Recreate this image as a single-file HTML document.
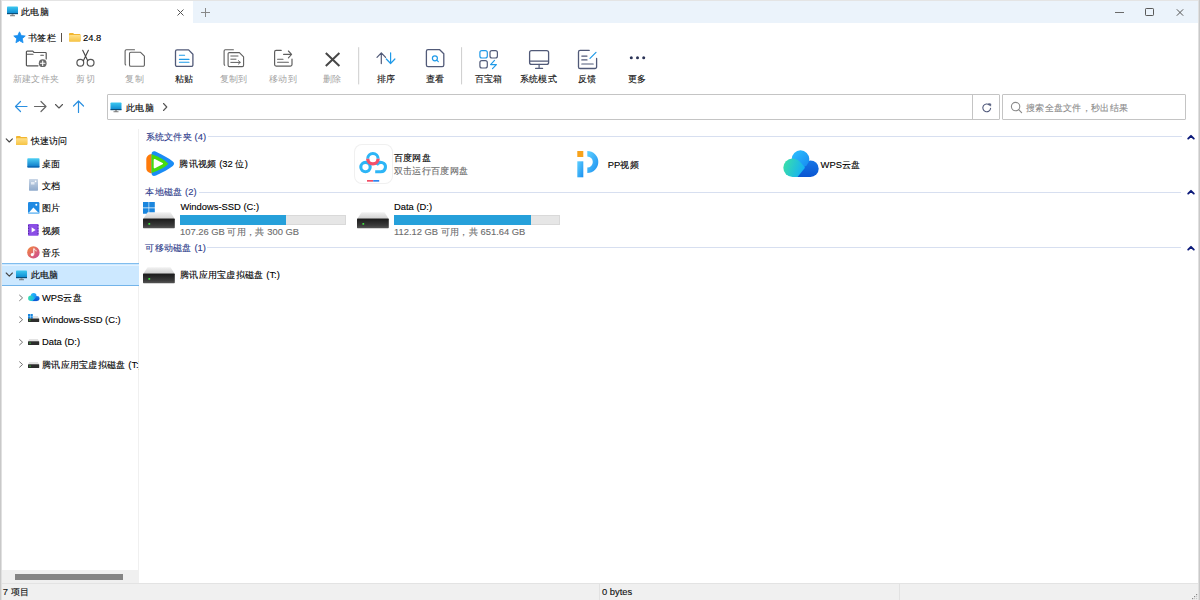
<!DOCTYPE html>
<html><head><meta charset="utf-8">
<style>
*{margin:0;padding:0;box-sizing:border-box}
html,body{width:1200px;height:600px;overflow:hidden;background:#fff}
body{position:relative;font-family:"Liberation Sans",sans-serif;font-size:9.4px;color:#000}
.a{position:absolute}
.t{position:absolute;white-space:nowrap;line-height:12px;-webkit-text-stroke-width:0.12px}
svg{position:absolute;overflow:visible}
.c{letter-spacing:0.3px}
</style></head><body>
<!-- window frame -->
<div class="a" style="left:0;top:0;width:1200px;height:1px;background:#e4e4e4"></div>
<div class="a" style="left:0;top:0;width:1px;height:600px;background:#c9c9c9"></div><div class="a" style="left:1px;top:0;width:1px;height:600px;background:#e0e0e0"></div>
<div class="a" style="left:1199px;top:0;width:1px;height:600px;background:#c9c9c9"></div><div class="a" style="left:1198px;top:0;width:1px;height:600px;background:#e0e0e0"></div>
<!-- title bar -->
<div class="a" style="left:2px;top:1px;width:1196px;height:22px;background:#ebf3fb"></div>
<div class="a" style="left:2px;top:1px;width:191px;height:22px;background:#fff"></div>


<!-- tab -->
<svg style="left:7px;top:6px" width="12" height="11" viewBox="0 0 12 11">
<defs><linearGradient id="scr" x1="0" y1="0" x2="0" y2="1"><stop offset="0" stop-color="#3cc8f0"/><stop offset="1" stop-color="#0b86cf"/></linearGradient></defs>
<rect x="0" y="0.5" width="11" height="7.5" rx="0.8" fill="url(#scr)"/>
<rect x="0" y="7" width="11" height="1.2" fill="#0a4f7a"/>
<rect x="4.5" y="8.2" width="2" height="1.3" fill="#8a8a8a"/>
<rect x="3" y="9.3" width="5" height="0.9" fill="#6a6a6a"/>
</svg>
<div class="t" style="left:21px;top:6px"><span class="c">此电脑</span></div>
<svg style="left:177px;top:9px" width="7" height="7" viewBox="0 0 7 7"><path d="M0.5 0.5L6.5 6.5M6.5 0.5L0.5 6.5" stroke="#555" stroke-width="1"/></svg>
<svg style="left:201px;top:8px" width="9" height="9" viewBox="0 0 9 9"><path d="M4.5 0V9M0 4.5H9" stroke="#888" stroke-width="1"/></svg>
<!-- window controls -->
<div class="a" style="left:1115px;top:11.5px;width:8.5px;height:1.2px;background:#6a6a6a"></div>
<div class="a" style="left:1145px;top:8.3px;width:9.3px;height:7.5px;border:1px solid #5a5a5a;border-radius:1.2px"></div>
<svg style="left:1176px;top:9px" width="8" height="7" viewBox="0 0 8 7"><path d="M0.8 0.3L7.2 6.7M7.2 0.3L0.8 6.7" stroke="#555" stroke-width="1"/></svg>
<!-- bookmarks -->
<svg style="left:13px;top:31px" width="13" height="13" viewBox="0 0 24 24"><path d="M12 1.5l3.2 6.9 7.4.8-5.5 5 1.5 7.4L12 17.8 5.4 21.6l1.5-7.4-5.5-5 7.4-.8z" fill="#1a8fef" stroke="#1a8fef" stroke-width="1.5" stroke-linejoin="round"/></svg>
<div class="t" style="left:28px;top:32px"><span class="c">书签栏</span></div>
<div class="a" style="left:61px;top:33px;width:1px;height:9px;background:#5a5048"></div>
<svg style="left:69px;top:33px" width="11.5" height="8.5" viewBox="0 0 12 10" preserveAspectRatio="none">
<defs><linearGradient id="fld" x1="0" y1="0" x2="0" y2="1"><stop offset="0" stop-color="#ffe08a"/><stop offset="1" stop-color="#f6c445"/></linearGradient></defs>
<path d="M0 1a1 1 0 0 1 1-1h3.2l1.2 1.2H11a1 1 0 0 1 1 1V9a1 1 0 0 1-1 1H1a1 1 0 0 1-1-1z" fill="#f2b630"/>
<rect x="0" y="2.4" width="12" height="7.6" rx="0.8" fill="url(#fld)"/>
</svg>
<div class="t" style="left:83px;top:32px">24.8</div>


<!-- toolbar icons -->
<svg style="left:0;top:0" width="1200" height="100" viewBox="0 0 1200 100" fill="none" stroke-linecap="round" stroke-linejoin="round">
<!-- new folder -->
<path d="M38 65.8H27.2a0.8 0.8 0 0 1-0.8-0.8V52a0.8 0.8 0 0 1 .8-.8h5.6l1.2 1.3H45.4a.8.8 0 0 1 .8.8V59" stroke="#555" stroke-width="1.2"/>
<path d="M26.6 54.2H33" stroke="#555" stroke-width="1.1"/>
<path d="M40.8 55.2H43.4" stroke="#555" stroke-width="1.1"/>
<circle cx="42.7" cy="63.2" r="3.9" fill="#6a6a6a"/>
<path d="M42.7 61v4.4M40.5 63.2h4.4" stroke="#fff" stroke-width="1.1"/>
<!-- scissors -->
<circle cx="80.3" cy="62.8" r="3.4" stroke="#555" stroke-width="1.2"/>
<circle cx="90.6" cy="62.8" r="3.4" stroke="#555" stroke-width="1.2"/>
<path d="M82.7 50.3L87.6 60.6M88.4 50.3L83.5 60.6" stroke="#444" stroke-width="1.1"/>
<!-- copy -->
<path d="M134.5 49.8H126.4a1.3 1.3 0 0 0-1.3 1.3V64a1.3 1.3 0 0 0 .6 1" stroke="#5f5f5f" stroke-width="1.1"/>
<path d="M130.8 52.3H140.6l3.8 3.8V65a1.3 1.3 0 0 1-1.3 1.3H130.8a1.3 1.3 0 0 1-1.3-1.3V53.6a1.3 1.3 0 0 1 1.3-1.3z" stroke="#5f5f5f" stroke-width="1.1"/>
<!-- paste -->
<path d="M177 49.9H188.6l4.3 4.3V64.9a1.5 1.5 0 0 1-1.5 1.5H177a1.5 1.5 0 0 1-1.5-1.5V51.4a1.5 1.5 0 0 1 1.5-1.5z" stroke="#515a78" stroke-width="1.3"/>
<path d="M179.4 55.2H184.6M179.4 59.4H189M179.4 62.3H189" stroke="#1f9ae8" stroke-width="1.1"/>
<!-- copy to -->
<path d="M233.4 49.8H225.3a1.2 1.2 0 0 0-1.2 1.2V64.3a1.2 1.2 0 0 0 .6 1" stroke="#5f5f5f" stroke-width="1.1"/>
<path d="M229.4 52.6H239.4l4.2 4.2V65.3a1.3 1.3 0 0 1-1.3 1.3H229.4a1.3 1.3 0 0 1-1.3-1.3V53.9a1.3 1.3 0 0 1 1.3-1.3z" stroke="#5f5f5f" stroke-width="1.1"/>
<path d="M230.8 56H238M230.8 59.2H236M230.8 62.4H240.2M238.4 60.7l1.8 1.7-1.8 1.7" stroke="#5f5f5f" stroke-width="1"/>
<!-- move to -->
<path d="M281.2 50.4H276.1a1.5 1.5 0 0 0-1.5 1.5V64.6a1.5 1.5 0 0 0 1.5 1.5H290.5a1.5 1.5 0 0 0 1.5-1.5V59.2" stroke="#5f5f5f" stroke-width="1.2"/>
<path d="M283.6 54.4H291.4M288.4 51l3.2 3.4-3.2 3.4" stroke="#5f5f5f" stroke-width="1.1"/>
<path d="M277.6 59.2H283M277.6 62.3H288.4" stroke="#5f5f5f" stroke-width="1.1"/>
<!-- delete -->
<path d="M325.8 53L339.4 66M339.4 53L325.8 66" stroke="#474747" stroke-width="2" stroke-linecap="butt"/>
<!-- separators -->
<path d="M358.7 47.2V84.4M461.6 47.2V84.4" stroke="#cdcdcd" stroke-width="1" stroke-linecap="butt"/>
<!-- sort -->
<path d="M381.3 53V63.6M377 57.4l4.3-4.6 4.3 4.6" stroke="#515a78" stroke-width="1.2"/>
<path d="M390.6 52.8V63.4M386.3 59l4.3 4.5 4.3-4.5" stroke="#1f9ae8" stroke-width="1.2"/>
<!-- view -->
<path d="M428 49.7H439.7l4.1 4.1V65a1.6 1.6 0 0 1-1.6 1.6H428a1.6 1.6 0 0 1-1.6-1.6V51.3a1.6 1.6 0 0 1 1.6-1.6z" stroke="#515a78" stroke-width="1.3"/>
<circle cx="434.9" cy="58.3" r="2.5" stroke="#1f9ae8" stroke-width="1.2"/>
<path d="M436.8 60.2L438.3 61.7" stroke="#1f9ae8" stroke-width="1.2"/>
<!-- baibaoxiang -->
<rect x="479.9" y="50.6" width="7.4" height="7.4" rx="2" stroke="#1f9ae8" stroke-width="1.2"/>
<rect x="490" y="50.6" width="7.4" height="7.4" rx="2" stroke="#515a78" stroke-width="1.2"/>
<rect x="479.9" y="60.6" width="7.4" height="7.4" rx="2" stroke="#515a78" stroke-width="1.2"/>
<path d="M494.5 60.4L490.6 64.6H496.4L492.5 68.6" stroke="#1f9ae8" stroke-width="1.2"/>
<!-- monitor -->
<rect x="529.6" y="50.6" width="19" height="13.8" rx="2" stroke="#515a78" stroke-width="1.3"/>
<path d="M530 61.2H548.2" stroke="#515a78" stroke-width="1.2"/>
<path d="M539.1 64.4V68.1M535.6 68.4H542.6" stroke="#515a78" stroke-width="1.2"/>
<!-- feedback -->
<path d="M589.2 50.4H580.1a1.6 1.6 0 0 0-1.6 1.6V66.9a1.6 1.6 0 0 0 1.6 1.6H595a1.6 1.6 0 0 0 1.6-1.6V58.4" stroke="#515a78" stroke-width="1.3"/>
<path d="M581.8 56.1H587M581.8 59.9H587M581.8 64H593.2" stroke="#515a78" stroke-width="1.2"/>
<path d="M590 58.4L596 52.4" stroke="#1f9ae8" stroke-width="1.2"/>
<!-- more -->
<circle cx="631.3" cy="57.8" r="1.5" fill="#2b3356"/>
<circle cx="637.5" cy="57.8" r="1.5" fill="#2b3356"/>
<circle cx="643.7" cy="57.8" r="1.5" fill="#2b3356"/>
</svg>
<div class="t" style="left:-14.0px;top:73px;width:100px;text-align:center;color:#a3a3a3;-webkit-text-stroke-width:0"><span class="c">新建文件夹</span></div>
<div class="t" style="left:35.7px;top:73px;width:100px;text-align:center;color:#a3a3a3;-webkit-text-stroke-width:0"><span class="c">剪切</span></div>
<div class="t" style="left:84.69999999999999px;top:73px;width:100px;text-align:center;color:#a3a3a3;-webkit-text-stroke-width:0"><span class="c">复制</span></div>
<div class="t" style="left:134.2px;top:73px;width:100px;text-align:center;color:#111"><span class="c">粘贴</span></div>
<div class="t" style="left:183.8px;top:73px;width:100px;text-align:center;color:#a3a3a3;-webkit-text-stroke-width:0"><span class="c">复制到</span></div>
<div class="t" style="left:233.0px;top:73px;width:100px;text-align:center;color:#a3a3a3;-webkit-text-stroke-width:0"><span class="c">移动到</span></div>
<div class="t" style="left:282.5px;top:73px;width:100px;text-align:center;color:#a3a3a3;-webkit-text-stroke-width:0"><span class="c">删除</span></div>
<div class="t" style="left:336.0px;top:73px;width:100px;text-align:center;color:#111"><span class="c">排序</span></div>
<div class="t" style="left:385.2px;top:73px;width:100px;text-align:center;color:#111"><span class="c">查看</span></div>
<div class="t" style="left:438.8px;top:73px;width:100px;text-align:center;color:#111"><span class="c">百宝箱</span></div>
<div class="t" style="left:488.4px;top:73px;width:100px;text-align:center;color:#111"><span class="c">系统模式</span></div>
<div class="t" style="left:537.5px;top:73px;width:100px;text-align:center;color:#111"><span class="c">反馈</span></div>
<div class="t" style="left:587.0px;top:73px;width:100px;text-align:center;color:#111"><span class="c">更多</span></div>


<!-- nav arrows -->
<svg style="left:0;top:0" width="200" height="130" viewBox="0 0 200 130" fill="none" stroke-linecap="round" stroke-linejoin="round">
<path d="M15.5 106.5H27M20.5 101.5l-5 5 5 5" stroke="#2a8fe0" stroke-width="1.2"/>
<path d="M34.5 106.5H46M41 101.5l5 5-5 5" stroke="#666" stroke-width="1.2"/>
<path d="M55.5 104.5l3.5 3.5 3.5-3.5" stroke="#555" stroke-width="1.1"/>
<path d="M78.5 101V112.5M73.5 106l5-5 5 5" stroke="#2a8fe0" stroke-width="1.2"/>
</svg>
<!-- address box -->
<div class="a" style="left:107px;top:94px;width:893px;height:26px;border:1px solid #c4c4c4;border-radius:1px"></div>
<div class="a" style="left:972px;top:95px;width:1px;height:24px;background:#c4c4c4"></div>
<svg style="left:110px;top:102px" width="13" height="11" viewBox="0 0 12 11">
<rect x="0" y="0.5" width="11" height="7.5" rx="0.8" fill="url(#scr)"/>
<rect x="0" y="7" width="11" height="1.2" fill="#0a4f7a"/>
<rect x="4.5" y="8.2" width="2" height="1.3" fill="#8a8a8a"/>
<rect x="3" y="9.3" width="5" height="0.9" fill="#6a6a6a"/>
</svg>
<div class="t" style="left:126px;top:101.5px"><span class="c">此电脑</span></div>
<svg style="left:160px;top:100px" width="10" height="14" viewBox="0 0 10 14" fill="none"><path d="M3.5 3.5l3.3 3.5-3.3 3.5" stroke="#555" stroke-width="1.1" stroke-linecap="round" stroke-linejoin="round"/></svg>
<svg style="left:980px;top:101px" width="14" height="14" viewBox="0 0 14 14" fill="none">
<path d="M10.6 7.4A3.9 3.9 0 1 1 9.4 4" stroke="#515a7c" stroke-width="1.1" stroke-linecap="round"/>
<path d="M8.6 2.6L10.9 2.9 10.6 5.2z" fill="#515a7c" stroke="#515a7c" stroke-width="0.6" stroke-linejoin="round"/>
</svg>
<!-- search -->
<div class="a" style="left:1002px;top:94px;width:184px;height:26px;border:1px solid #c4c4c4;border-radius:1px"></div>
<svg style="left:1010px;top:101px" width="13" height="13" viewBox="0 0 13 13" fill="none">
<circle cx="5.6" cy="5.6" r="4.2" stroke="#8a8a8a" stroke-width="1.1"/>
<path d="M8.7 8.7L11.6 11.6" stroke="#8a8a8a" stroke-width="1.2" stroke-linecap="round"/>
</svg>
<div class="t" style="left:1026px;top:101.5px;color:#8c8c8c"><span class="c">搜索全盘文件，秒出结果</span></div>


<!-- sidebar -->
<div class="a" style="left:138px;top:129px;width:1px;height:454px;background:#f0f0f0"></div>
<div class="a" style="left:2px;top:263px;width:136.5px;height:23px;background:#cce8ff;border-top:1.6px solid #80bdee;border-bottom:1.2px solid #72b4ea"></div>
<div class="a" style="left:2px;top:264.6px;width:136.5px;height:1px;background:#e3f2ff"></div>
<svg style="left:0;top:0" width="140" height="380" viewBox="0 0 140 380" fill="none" stroke-linecap="round" stroke-linejoin="round">
<path d="M6.2 138.9l3.1 3.1 3.1-3.1" stroke="#444" stroke-width="1.1"/>
<path d="M6.2 273l3.1 3.1 3.1-3.1" stroke="#444" stroke-width="1.1"/>
<path d="M19.6 295.2l3 2.7-3 2.7M19.6 317l3 2.7-3 2.7M19.6 339.5l3 2.7-3 2.7M19.6 361.8l3 2.7-3 2.7" stroke="#777" stroke-width="1"/>
</svg>
<!-- quick access folder -->
<svg style="left:16.2px;top:135.8px" width="11.3" height="8.9" viewBox="0 0 12 10" preserveAspectRatio="none">
<path d="M0 1a1 1 0 0 1 1-1h3.2l1.2 1.2H11a1 1 0 0 1 1 1V9a1 1 0 0 1-1 1H1a1 1 0 0 1-1-1z" fill="#f2b630"/>
<rect x="0" y="2.4" width="12" height="7.6" rx="0.8" fill="url(#fld)"/>
</svg>
<div class="t" style="left:30.5px;top:134.5px"><span class="c">快速访问</span></div>
<!-- desktop -->
<svg style="left:27px;top:158px" width="13" height="10" viewBox="0 0 13 10">
<defs><linearGradient id="dsk" x1="0" y1="0" x2="0" y2="1"><stop offset="0" stop-color="#4fd0f4"/><stop offset="1" stop-color="#0a74c6"/></linearGradient></defs>
<rect x="0.3" y="0.2" width="12.2" height="9.2" rx="0.8" fill="url(#dsk)"/>
<rect x="0.3" y="8.4" width="12.2" height="1" fill="#0b5ea8"/>
</svg>
<div class="t" style="left:42px;top:157.5px"><span class="c">桌面</span></div>
<!-- docs -->
<svg style="left:29px;top:179px" width="9" height="12" viewBox="0 0 9 12">
<defs><linearGradient id="doc" x1="0" y1="0" x2="0" y2="1"><stop offset="0" stop-color="#c9d6e6"/><stop offset="1" stop-color="#8ea9cb"/></linearGradient></defs>
<rect x="0" y="0" width="9" height="11.7" rx="0.6" fill="url(#doc)"/>
<rect x="2" y="3" width="3.5" height="2.5" fill="#eef3f9" opacity="0.8"/>
<circle cx="6.6" cy="2.4" r="0.8" fill="#fff"/>
</svg>
<div class="t" style="left:42px;top:180px"><span class="c">文档</span></div>
<!-- pictures -->
<svg style="left:27.5px;top:202px" width="12" height="12" viewBox="0 0 12 12">
<rect x="0" y="0" width="11.4" height="11.6" rx="1.2" fill="#1f8ae3"/>
<path d="M0.6 11L5.4 5.6 10.8 11z" fill="#fff"/>
<rect x="0" y="10.3" width="11.4" height="1.3" fill="#7cc2f5"/>
<circle cx="8.3" cy="2.7" r="1" fill="#fff"/>
</svg>
<div class="t" style="left:42px;top:202px"><span class="c">图片</span></div>
<!-- video -->
<svg style="left:28.3px;top:224px" width="11" height="12" viewBox="0 0 11 12">
<rect x="0" y="0" width="10.6" height="11.8" rx="0.8" fill="#8b4ee6"/>
<path d="M0.6 1.2v1M0.6 3.8v1M0.6 6.5v1M0.6 9.2v1M10 1.2v1M10 3.8v1M10 6.5v1M10 9.2v1" stroke="#3a1d7a" stroke-width="0.9"/>
<path d="M3.6 3.2L7.6 5.9 3.6 8.6z" fill="#fff"/>
</svg>
<div class="t" style="left:42px;top:224.5px"><span class="c">视频</span></div>
<!-- music -->
<svg style="left:27px;top:246px" width="13" height="13" viewBox="0 0 13 13">
<defs><linearGradient id="mus" x1="0" y1="0" x2="1" y2="1"><stop offset="0" stop-color="#f58a3a"/><stop offset="1" stop-color="#c9479a"/></linearGradient></defs>
<circle cx="6.4" cy="6.4" r="6.2" fill="url(#mus)"/>
<path d="M6.8 2.6V8.4" stroke="#fff" stroke-width="1.1"/>
<circle cx="5.3" cy="8.6" r="1.6" fill="#fff"/>
<path d="M6.8 2.6C7.6 3.6 9 3.8 9.2 5.3" stroke="#fff" stroke-width="1" fill="none"/>
</svg>
<div class="t" style="left:42px;top:246.5px"><span class="c">音乐</span></div>
<!-- this pc -->
<svg style="left:16px;top:269.5px" width="12" height="11" viewBox="0 0 12 11">
<rect x="0" y="0.5" width="11" height="7.5" rx="0.8" fill="url(#scr)"/>
<rect x="0" y="7" width="11" height="1.2" fill="#0a4f7a"/>
<rect x="4.5" y="8.2" width="2" height="1.3" fill="#8a8a8a"/>
<rect x="3" y="9.3" width="5" height="0.9" fill="#6a6a6a"/>
</svg>
<div class="t" style="left:30.5px;top:269px"><span class="c">此电脑</span></div>
<!-- wps -->
<svg style="left:27.6px;top:293px" width="11.6" height="8.4" viewBox="0 0 36 28" preserveAspectRatio="none">
<circle cx="27.4" cy="18.7" r="8.3" fill="url(#wr)"/>
<rect x="12" y="18.7" width="15.4" height="8.3" fill="url(#wr)"/>
<circle cx="17.5" cy="9.1" r="8.8" fill="url(#wt)"/>
<path d="M9.5 8.6C14.5 8.6 18 12.5 22 17.7L14.5 27H9.5A9.2 9.2 0 0 1 9.5 8.6z" fill="url(#wl)"/>
</svg>
<div class="t" style="left:42px;top:291.5px">WPS<span class="c">云盘</span></div>
<!-- windows ssd -->
<svg style="left:28px;top:313.5px" width="5" height="5" viewBox="0 0 5 5"><path d="M0 0h2.2v2.2H0zM2.6 0h2.2v2.2H2.6zM0 2.6h2.2v2.2H0zM2.6 2.6h2.2v2.2H2.6z" fill="#1a88e0"/></svg>
<svg style="left:28px;top:316px" width="12" height="6" viewBox="0 0 12 6">
<path d="M5 0H9.8L11.2 2.4H5z" fill="#e2e2e2"/>
<rect x="0" y="2.4" width="11.2" height="3.5" rx="0.4" fill="#2d2d2d"/>
<rect x="1.2" y="3.5" width="1.3" height="1.1" fill="#36d43a"/>
</svg>
<div class="t" style="left:42px;top:313.5px">Windows-SSD (C:)</div>
<svg style="left:28px;top:339px" width="12" height="7" viewBox="0 0 12 7">
<path d="M1.2 0H9.8L11.2 2.4H0z" fill="#e2e2e2"/>
<rect x="0" y="2.2" width="11.2" height="3.8" rx="0.5" fill="#2d2d2d"/>
<rect x="1.4" y="3.6" width="1.3" height="1.1" fill="#36d43a"/>
</svg>
<div class="t" style="left:42px;top:336px">Data (D:)</div>
<svg style="left:28px;top:361.5px" width="12" height="7" viewBox="0 0 12 7">
<path d="M1.2 0H9.8L11.2 2.4H0z" fill="#e2e2e2"/>
<rect x="0" y="2.2" width="11.2" height="3.8" rx="0.5" fill="#2d2d2d"/>
<rect x="1.4" y="3.6" width="1.3" height="1.1" fill="#36d43a"/>
</svg>
<div class="t" style="left:42px;top:358.5px;width:96.5px;overflow:hidden"><span class="c">腾讯应用宝虚拟磁盘</span> (T:)</div>
<!-- sidebar scrollbar -->
<div class="a" style="left:2px;top:570px;width:136.5px;height:13px;background:#f0f0f0"></div>
<div class="a" style="left:15px;top:574px;width:108px;height:5.5px;background:#858585"></div>
<!-- status bar -->
<div class="a" style="left:2px;top:583px;width:1196px;height:17px;background:#f0f0f0;border-top:1px solid #e3e3e3"></div>
<div class="a" style="left:599px;top:584px;width:1px;height:16px;background:#e2e2e2"></div>
<div class="a" style="left:899px;top:584px;width:1px;height:16px;background:#e2e2e2"></div>
<div class="t" style="left:2.8px;top:585.5px;color:#111">7 <span class="c">项目</span></div>
<div class="t" style="left:602px;top:585.5px;color:#111">0 bytes</div>

<div class="t" style="left:145.5px;top:131.3px;color:#2f3d8c"><span class="c">系统文件夹</span> (4)</div>
<div class="a" style="left:207.5px;top:136px;width:974.0px;height:1px;background:#d7dff0"></div>
<svg style="left:1186.5px;top:133.8px" width="8" height="6" viewBox="0 0 8 6" fill="none"><path d="M1.2 4.6L4 1.8 6.8 4.6" stroke="#0c1a7a" stroke-width="1.9" stroke-linecap="round" stroke-linejoin="round"/></svg>
<div class="t" style="left:145.3px;top:186.2px;color:#2f3d8c"><span class="c">本地磁盘</span> (2)</div>
<div class="a" style="left:198.7px;top:192px;width:982.8px;height:1px;background:#d7dff0"></div>
<svg style="left:1186.5px;top:189.2px" width="8" height="6" viewBox="0 0 8 6" fill="none"><path d="M1.2 4.6L4 1.8 6.8 4.6" stroke="#0c1a7a" stroke-width="1.9" stroke-linecap="round" stroke-linejoin="round"/></svg>
<div class="t" style="left:145.3px;top:241.6px;color:#2f3d8c"><span class="c">可移动磁盘</span> (1)</div>
<div class="a" style="left:207.3px;top:247px;width:974.2px;height:1px;background:#d7dff0"></div>
<svg style="left:1186.5px;top:244.6px" width="8" height="6" viewBox="0 0 8 6" fill="none"><path d="M1.2 4.6L4 1.8 6.8 4.6" stroke="#0c1a7a" stroke-width="1.9" stroke-linecap="round" stroke-linejoin="round"/></svg>

<!-- tencent video -->
<svg style="left:146px;top:151px" width="29" height="26" viewBox="0 0 29 26">
<path d="M5.8 3C2.6 3.4 0.3 5.3 0.3 8.5V17C0.3 20.2 2.6 22 5.8 22.4z" fill="#ff7a0a"/>
<path d="M5.6 3C5.6 0.5 7.5-0.3 10 0.8C17 4 23 7.5 26.8 10.5C28.5 11.8 28.5 13.6 26.8 14.9C23 17.8 17 21.3 10 24.4C7.5 25.5 5.6 24.7 5.6 22.2z" fill="#1a8cf5"/>
<path d="M5.6 3.2C13 5.8 18.8 9 22.4 12.7C18.8 16.4 13 19.4 5.6 22.1z" fill="#46dc0e"/>
<path d="M7.7 8.8C7.7 8.1 8.3 7.8 8.9 8.1L16.6 12.1C17.2 12.4 17.2 13 16.6 13.3L8.9 17.3C8.3 17.6 7.7 17.3 7.7 16.6z" fill="#fff"/>
</svg>
<div class="t" style="left:179.4px;top:158px"><span class="c">腾讯视频</span> (32 <span class="c">位</span>)</div>
<!-- baidu -->
<div class="a" style="left:355px;top:145.3px;width:37px;height:37.3px;border-radius:7px;background:#fff;box-shadow:0 0 0 1px #f0f0f0"></div>
<svg style="left:355px;top:145px" width="37" height="38" viewBox="0 0 37 38" fill="none">
<circle cx="10.5" cy="22.1" r="4.7" stroke="#2db5f6" stroke-width="3.1"/>
<path d="M20.2 26.8H25.8A4.7 4.7 0 1 0 21.6 19.9" stroke="#2db5f6" stroke-width="3.1"/>
<path d="M12.7 13.7A5.2 5.2 0 0 1 23.1 13.7" stroke="#2db5f6" stroke-width="3.1"/>
<path d="M12.7 13.7A5.2 5.2 0 0 0 23.1 13.7" stroke="#f4506a" stroke-width="3.4"/>
<rect x="12" y="35" width="6.2" height="1.7" fill="#f24e66"/>
<rect x="18.2" y="35" width="6" height="1.7" fill="#2f86f0"/>
</svg>
<div class="t" style="left:393.8px;top:151.8px"><span class="c">百度网盘</span></div>
<div class="t" style="left:393.8px;top:164.5px;color:#6b6b6b"><span class="c">双击运行百度网盘</span></div>
<!-- pp video -->
<svg style="left:576px;top:150px" width="24" height="28" viewBox="0 0 24 28">
<defs><linearGradient id="ppb" x1="0" y1="0" x2="1" y2="1"><stop offset="0" stop-color="#5fd0ff"/><stop offset="1" stop-color="#1a8ff0"/></linearGradient></defs>
<rect x="1.3" y="1" width="6" height="6" fill="#f7a21b"/>
<rect x="1.3" y="11.3" width="6" height="16" fill="url(#ppb)"/>
<path d="M11.3 1A11 11 0 0 1 11.3 23V17.5A5.5 5.5 0 0 0 11.3 6.5z" fill="url(#ppb)"/>
</svg>
<div class="t" style="left:607.7px;top:158.5px">PP<span class="c">视频</span></div>
<!-- wps cloud -->
<svg style="left:783px;top:150px" width="36" height="28" viewBox="0 0 36 28">
<defs><linearGradient id="wt" x1="0" y1="0" x2="1" y2="1"><stop offset="0" stop-color="#2cc2ff"/><stop offset="1" stop-color="#1688f0"/></linearGradient>
<linearGradient id="wr" gradientUnits="userSpaceOnUse" x1="0" y1="10" x2="0" y2="27"><stop offset="0" stop-color="#1776e6"/><stop offset="1" stop-color="#0a56d2"/></linearGradient>
<linearGradient id="wl" x1="0" y1="0" x2="1" y2="0.3"><stop offset="0" stop-color="#3de3a2"/><stop offset="1" stop-color="#17b2f2"/></linearGradient></defs>
<circle cx="27.4" cy="18.7" r="8.3" fill="url(#wr)"/>
<rect x="12" y="18.7" width="15.4" height="8.3" fill="url(#wr)"/>
<circle cx="17.5" cy="9.1" r="8.8" fill="url(#wt)"/>
<path d="M9.5 8.6C14.5 8.6 18 12.5 22 17.7L14.5 27H9.5A9.2 9.2 0 0 1 9.5 8.6z" fill="url(#wl)"/>
</svg>
<div class="t" style="left:820.6px;top:158.5px">WPS<span class="c">云盘</span></div>
<!-- local disks -->
<svg style="left:142.5px;top:202px" width="13" height="13" viewBox="0 0 13 13"><path d="M0 0h5.6v5.6H0zM6.2 0h5.6v5.6H6.2zM0 6.2h5.6v5.6H0zM6.2 6.2h5.6v5.6H6.2z" fill="#1a86de"/></svg>
<svg style="left:143px;top:211.5px" width="33" height="17" viewBox="0 0 33 17">
<defs><linearGradient id="dtop143211.5" x1="0" y1="0" x2="0" y2="1"><stop offset="0" stop-color="#f2f2f2"/><stop offset="1" stop-color="#cfcfcf"/></linearGradient>
<linearGradient id="dbot143211.5" x1="0" y1="0" x2="0" y2="1"><stop offset="0" stop-color="#1a1a1a"/><stop offset="0.7" stop-color="#3a3a3a"/><stop offset="1" stop-color="#555"/></linearGradient></defs>
<path d="M4.6 0.3H27.5L31.7 6.8H0.3z" fill="url(#dtop143211.5)"/>
<rect x="0" y="6.6" width="31.8" height="9.6" rx="0.6" fill="url(#dbot143211.5)"/>
<rect x="5.4" y="11" width="1.8" height="1.8" rx="0.3" fill="#3ee03e"/>
</svg>
<div class="t" style="left:180.4px;top:201px">Windows-SSD (C:)</div>
<div class="a" style="left:180px;top:214.5px;width:166px;height:10px;background:#e6e6e6;border:1px solid #d9d9d9"></div>
<div class="a" style="left:180px;top:214.5px;width:106px;height:10px;background:#26a0da"></div>
<div class="t" style="left:180px;top:226px;color:#6d6d6d">107.26 GB <span class="c">可用，共</span> 300 GB</div>
<svg style="left:357px;top:211.5px" width="33" height="17" viewBox="0 0 33 17">
<defs><linearGradient id="dtop357211.5" x1="0" y1="0" x2="0" y2="1"><stop offset="0" stop-color="#f2f2f2"/><stop offset="1" stop-color="#cfcfcf"/></linearGradient>
<linearGradient id="dbot357211.5" x1="0" y1="0" x2="0" y2="1"><stop offset="0" stop-color="#1a1a1a"/><stop offset="0.7" stop-color="#3a3a3a"/><stop offset="1" stop-color="#555"/></linearGradient></defs>
<path d="M4.6 0.3H27.5L31.7 6.8H0.3z" fill="url(#dtop357211.5)"/>
<rect x="0" y="6.6" width="31.8" height="9.6" rx="0.6" fill="url(#dbot357211.5)"/>
<rect x="5.4" y="11" width="1.8" height="1.8" rx="0.3" fill="#3ee03e"/>
</svg>
<div class="t" style="left:394px;top:201px">Data (D:)</div>
<div class="a" style="left:394px;top:214.5px;width:165.5px;height:10px;background:#e6e6e6;border:1px solid #d9d9d9"></div>
<div class="a" style="left:394px;top:214.5px;width:136.5px;height:10px;background:#26a0da"></div>
<div class="t" style="left:394px;top:226px;color:#6d6d6d">112.12 GB <span class="c">可用，共</span> 651.64 GB</div>
<svg style="left:143px;top:267px" width="33" height="17" viewBox="0 0 33 17">
<defs><linearGradient id="dtop143267" x1="0" y1="0" x2="0" y2="1"><stop offset="0" stop-color="#f2f2f2"/><stop offset="1" stop-color="#cfcfcf"/></linearGradient>
<linearGradient id="dbot143267" x1="0" y1="0" x2="0" y2="1"><stop offset="0" stop-color="#1a1a1a"/><stop offset="0.7" stop-color="#3a3a3a"/><stop offset="1" stop-color="#555"/></linearGradient></defs>
<path d="M4.6 0.3H27.5L31.7 6.8H0.3z" fill="url(#dtop143267)"/>
<rect x="0" y="6.6" width="31.8" height="9.6" rx="0.6" fill="url(#dbot143267)"/>
<rect x="5.4" y="11" width="1.8" height="1.8" rx="0.3" fill="#3ee03e"/>
</svg>
<div class="t" style="left:180px;top:269px"><span class="c">腾讯应用宝虚拟磁盘</span> (T:)</div>

<div id="status"></div>
<svg style="left:1188px;top:590px" width="10" height="10" viewBox="0 0 10 10">
<rect x="8" y="4" width="1.2" height="1.2" fill="#8a8a8a"/>
<rect x="6" y="6" width="1.2" height="1.2" fill="#8a8a8a"/><rect x="8" y="6" width="1.2" height="1.2" fill="#c8c8c8"/>
<rect x="4" y="8" width="1.2" height="1.2" fill="#8a8a8a"/><rect x="6" y="8" width="1.2" height="1.2" fill="#c8c8c8"/><rect x="8" y="8" width="1.2" height="1.2" fill="#c8c8c8"/>
</svg>
</body></html>
